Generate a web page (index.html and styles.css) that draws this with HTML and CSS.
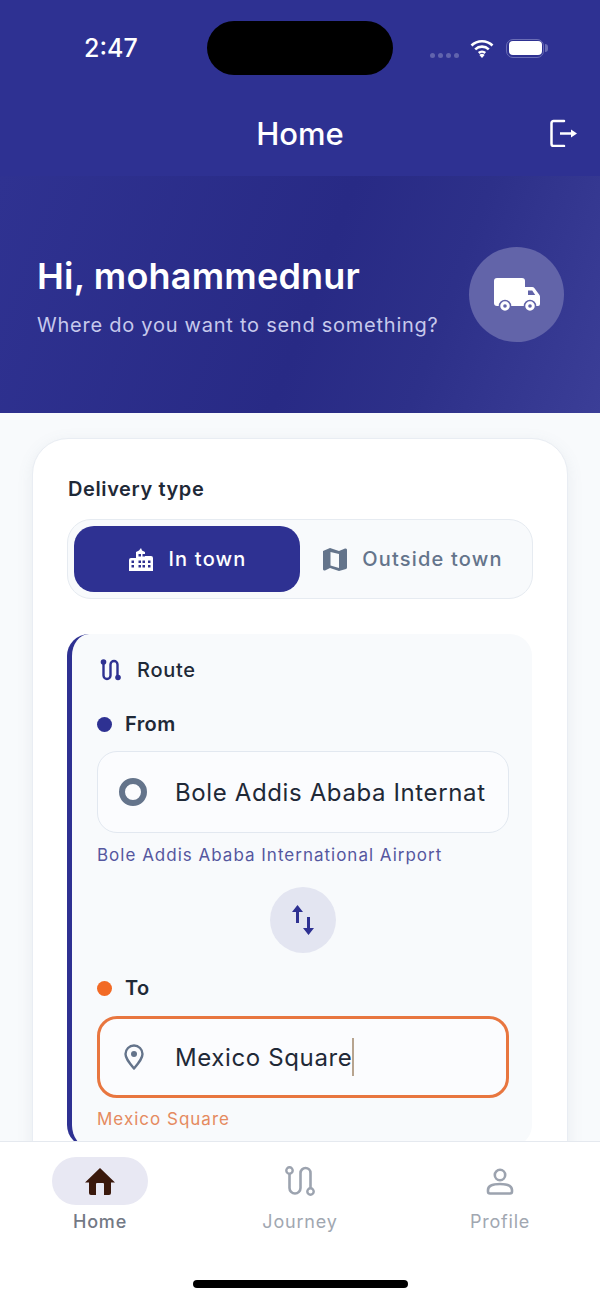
FILE: index.html
```html
<!DOCTYPE html>
<html lang="en">
<head>
    <meta charset="UTF-8">
    <title>Home</title>
    <meta name="viewport" content="width=device-width, initial-scale=1.0">
    <link rel="stylesheet" href="styles.css">
</head>
<body>
    <div class="app">
        <!-- Status bar and title -->
        <header class="topbar">
            <div class="status">
                <div class="status-left">2:47</div>
                <div class="island"></div>
                <div class="status-right">
                    <div class="signal"><i></i><i></i><i></i><i></i></div>
                    <svg class="wifi" viewBox="0 0 24 19" width="24" height="19">
                        <path d="M1.5 6.5a15 15 0 0 1 21 0M5.2 10.4a9.8 9.8 0 0 1 13.6 0M8.8 14a4.6 4.6 0 0 1 6.4 0" fill="none" stroke="#fff" stroke-width="2.6"/>
                        <path d="M12 19l-2.6-3a3.6 3.6 0 0 1 5.2 0z" fill="#fff"/>
                    </svg>
                    <div class="battery"><span></span></div>
                </div>
            </div>
            <div class="titlebar">
                <h1 class="title">Home</h1>
                <svg class="logout" viewBox="0 0 28 28" width="28" height="28">
                    <path d="M15 2H4.500A2 2 0 0 0 2.500 4v21a2 2 0 0 0 2 2H15" fill="none" stroke="#fff" stroke-width="2.500" stroke-linecap="round"/>
                    <path d="M11 14.500h12" stroke="#fff" stroke-width="2.500"/>
                    <path d="M22 10.500l6 4-6 4z" fill="#fff"/>
                </svg>
            </div>
        </header>

        <!-- Greeting -->
        <section class="hero">
            <div class="hero-text">
                <h2 class="hero-name">Hi, mohammednur</h2>
                <p class="hero-sub">Where do you want to send something?</p>
            </div>
            <div class="hero-badge">
                <svg viewBox="0 0 46 34" width="46" height="34">
                    <path d="M3 0h25a3 3 0 0 1 3 3v25H3a3 3 0 0 1-3-3V3a3 3 0 0 1 3-3z" fill="#fff"/>
                    <path d="M31 9h7a3 3 0 0 1 2.500 1.300l4.600 6.200a3 3 0 0 1 .9 2V26a2 2 0 0 1-2 2H31z" fill="#fff"/>
                    <path d="M34 12.500h4.200l3 4.500H34z" fill="#6264a9"/>
                    <circle cx="11" cy="28" r="5.500" fill="#fff" stroke="#6264a9" stroke-width="1.500"/>
                    <circle cx="11" cy="28" r="1.800" fill="#6264a9"/>
                    <circle cx="36" cy="28" r="5.500" fill="#fff" stroke="#6264a9" stroke-width="1.500"/>
                    <circle cx="36" cy="28" r="1.800" fill="#6264a9"/>
                </svg>
            </div>
        </section>

        <main class="content">
            <div class="card">
                <div class="card-label">Delivery type</div>
                <div class="toggle">
                    <div class="toggle-item active">
                        <svg viewBox="0 0 24 23" width="24" height="23">
                            <path fill-rule="evenodd" fill="#fff" d="M12 0l1 2.500 3 1.500v4h6a2 2 0 0 1 2 2v13H0V12a2 2 0 0 1 2-2h5V4l3-1.500zM9.500 6v2.500H12V6zm4 0v2.500H16V6zM2.500 12.500V15H5v-2.500zm7 0V15H12v-2.500zm4 0V15H16v-2.500zm5.500 0V15h2.500v-2.500zm-16.500 4.500V19.500H5V17zm7 0v2.500H12V17zm4 0v2.500H16V17zm5.500 0v2.500h2.500V17z"/>
                        </svg>
                        <span>In town</span>
                    </div>
                    <div class="toggle-item">
                        <svg viewBox="0 0 24 23" width="24" height="23">
                            <path fill-rule="evenodd" fill="#64748b" d="M0 3l7-3 9 3 6-2.500a1.500 1.500 0 0 1 2 1.500v17.500a2 2 0 0 1-1 1.500l-7 2-9-3-5 2.500a1.500 1.500 0 0 1-2-1.500zM7.500 4v13.500l8.500 2.500V6z"/>
                        </svg>
                        <span>Outside town</span>
                    </div>
                </div>

                <div class="route">
                    <div class="route-head">
                        <svg viewBox="0 0 22 22" width="22" height="22">
                            <path d="M3.500 3.500v13a3.500 3.500 0 0 0 7 0v-11a3.500 3.500 0 0 1 7 0v12" fill="none" stroke="#2e3192" stroke-width="2.400"/>
                            <circle cx="3.500" cy="3" r="2.800" fill="#2e3192"/>
                            <circle cx="18" cy="18.500" r="2.800" fill="#2e3192"/>
                        </svg>
                        <span>Route</span>
                    </div>

                    <div class="field-label from-label"><i class="dot blue"></i>From</div>
                    <div class="field">
                        <div class="field-icon"><div class="ring"></div></div>
                        <div class="field-text">Bole Addis Ababa Internat</div>
                    </div>
                    <div class="hint blue-text">Bole Addis Ababa International Airport</div>

                    <div class="swap">
                        <svg viewBox="0 0 22 30" width="22" height="30">
                            <path d="M5.500 18V5M16.500 12v13" fill="none" stroke="#2e3192" stroke-width="3"/>
                            <path d="M0 7l5.500-7L11 7zM11 23l5.500 7 5.500-7z" fill="#2e3192"/>
                        </svg>
                    </div>

                    <div class="field-label to-label"><i class="dot orange"></i>To</div>
                    <div class="field focused">
                        <div class="field-icon">
                            <svg viewBox="0 0 20 26" width="20" height="26">
                                <path d="M10 24.500C5 18.500 1.500 14.500 1.500 10a8.500 8.500 0 0 1 17 0c0 4.500-3.500 8.500-8.500 14.500z" fill="none" stroke="#64748b" stroke-width="2.400" stroke-linejoin="round"/>
                                <circle cx="10" cy="10" r="3" fill="#64748b"/>
                            </svg>
                        </div>
                        <div class="field-text">Mexico Square<i class="caret"></i></div>
                    </div>
                    <div class="hint orange-text">Mexico Square</div>
                </div>
            </div>
        </main>

        <!-- Bottom tabs -->
        <nav class="tabs">
            <div class="tab-row">
                <div class="tab active">
                    <div class="tab-icon">
                        <svg viewBox="0 0 30 27" width="30" height="27">
                            <path fill="#3a190c" d="M15 0l15 14.500h-4V25a2 2 0 0 1-2 2h-5V16a1 1 0 0 0-1-1h-6a1 1 0 0 0-1 1v11H6a2 2 0 0 1-2-2V14.500H0z"/>
                        </svg>
                    </div>
                    <span>Home</span>
                </div>
                <div class="tab">
                    <div class="tab-icon">
                        <svg viewBox="0 0 30 30" width="30" height="30">
                            <path d="M5 7v15a5.500 5.500 0 0 0 11 0V7a5 5 0 0 1 10 0v15" transform="translate(-.5 0)" fill="none" stroke="#9ca3af" stroke-width="2.600"/>
                            <circle cx="4.500" cy="4.500" r="3.200" fill="#fff" stroke="#9ca3af" stroke-width="2.400"/>
                            <circle cx="25.500" cy="25.500" r="3.200" fill="#fff" stroke="#9ca3af" stroke-width="2.400"/>
                        </svg>
                    </div>
                    <span>Journey</span>
                </div>
                <div class="tab">
                    <div class="tab-icon">
                        <svg viewBox="0 0 28 27" width="28" height="27">
                            <circle cx="14" cy="7" r="5.200" fill="none" stroke="#9ca3af" stroke-width="2.600"/>
                            <path d="M2 22c0-3.500 4-6 12-6s12 2.500 12 6v1.500a2 2 0 0 1-2 2H4a2 2 0 0 1-2-2z" fill="none" stroke="#9ca3af" stroke-width="2.600"/>
                        </svg>
                    </div>
                    <span>Profile</span>
                </div>
            </div>
            <div class="home-bar"></div>
        </nav>
    </div>
</body>
</html>
```

FILE: styles.css
```css
* {
    margin: 0;
    padding: 0;
    box-sizing: border-box;
}

body {
    font-family: Inter, "Noto Sans", sans-serif;
    background-color: #f8fafc;
}

.app {
    display: flex;
    flex-direction: column;
    height: 100vh;
    overflow: hidden;
}

/* Top bar */
.topbar {
    flex-shrink: 0;
    height: 176px;
    background-color: #2e3192;
    color: #fff;
}

.status {
    display: flex;
    align-items: center;
    padding-top: 21px;
}

.status-left {
    width: 207px;
    padding-left: 84px;
    font-size: 25px;
    font-weight: 500;
}

.island {
    width: 186px;
    height: 54px;
    border-radius: 27px;
    background-color: #000;
}

.status-right {
    display: flex;
    align-items: center;
    padding-left: 37px;
}

.signal {
    display: flex;
    gap: 3px;
    margin-top: 14px;
    margin-right: 11px;
}

.signal i {
    width: 5px;
    height: 5px;
    border-radius: 50%;
    background-color: #6164ad;
}

.wifi {
    margin-right: 12px;
}

.battery {
    position: relative;
    width: 38px;
    height: 19px;
    padding: 1.5px;
    border: 1.5px solid #6a6db5;
    border-radius: 7px;
}

.battery span {
    display: block;
    height: 100%;
    border-radius: 4px;
    background-color: #fff;
}

.battery:after {
    content: "";
    position: absolute;
    top: 4px;
    right: -5px;
    width: 3px;
    height: 8px;
    border-radius: 0 3px 3px 0;
    background-color: #6a6db5;
}

.titlebar {
    position: relative;
    margin-top: 39px;
    text-align: center;
}

.title {
    font-size: 31px;
    line-height: 40px;
    font-weight: 500;
}

.logout {
    position: absolute;
    top: 5px;
    right: 23px;
}

/* Greeting */
.hero {
    flex-shrink: 0;
    display: flex;
    align-items: center;
    justify-content: space-between;
    height: 237px;
    padding: 0 36px 0 37px;
    background: linear-gradient(110deg, #2f3291 0%, #282a85 52%, #2d3089 72%, #3b3e97 100%);
    color: #fff;
}

.hero-text {
    padding-top: 4px;
}

.hero-name {
    font-size: 36px;
    line-height: 42px;
    font-weight: 600;
    letter-spacing: 0.2px;
}

.hero-sub {
    margin-top: 15px;
    font-size: 20px;
    line-height: 26px;
    letter-spacing: 0.75px;
    color: #c7c9ec;
}

.hero-badge {
    display: flex;
    align-items: center;
    justify-content: center;
    width: 95px;
    height: 95px;
    border-radius: 50%;
    background-color: #6264a9;
}

/* Main card */
.content {
    flex: 1;
    min-height: 0;
    overflow: hidden;
    padding: 25px 32px 0;
}

.card {
    height: 800px;
    padding: 38px 34px 0;
    background-color: #fff;
    border: 1px solid #e9edf3;
    border-radius: 36px;
    box-shadow: 0 4px 16px rgba(100, 116, 139, 0.1);
}

.card-label {
    padding-left: 1px;
    font-size: 20px;
    line-height: 24px;
    font-weight: 600;
    letter-spacing: 0.6px;
    color: #1f2937;
}

.toggle {
    display: flex;
    height: 80px;
    margin-top: 18px;
    padding: 6px;
    background-color: #f8fafc;
    border: 1px solid #e6ebf1;
    border-radius: 24px;
}

.toggle-item {
    display: flex;
    align-items: center;
    justify-content: center;
    gap: 15px;
    width: 50%;
    border-radius: 20px;
    font-size: 20px;
    font-weight: 500;
    letter-spacing: 1.2px;
    color: #64748b;
}

.toggle-item.active {
    padding-left: 2px;
    background-color: #2e3192;
    color: #fff;
}

/* Route panel */
.route {
    margin: 35px 1px 0 0;
    padding: 24px 23px 16px 25px;
    background-color: #f8fafc;
    border-left: 5px solid #2e3192;
    border-radius: 22px;
}

.route-head {
    display: flex;
    align-items: center;
    gap: 15px;
    height: 24px;
    padding-left: 3px;
    font-size: 20px;
    font-weight: 500;
    letter-spacing: 0.7px;
    color: #1f2937;
}

.field-label {
    display: flex;
    align-items: center;
    height: 24px;
    font-size: 20px;
    font-weight: 600;
    letter-spacing: 0.4px;
    color: #1f2937;
}

.from-label {
    margin-top: 30px;
}

.to-label {
    margin-top: 23px;
}

.dot {
    width: 15px;
    height: 15px;
    margin-right: 13px;
    border-radius: 50%;
}

.dot.blue {
    background-color: #2e3192;
}

.dot.orange {
    background-color: #f26a25;
}

.field {
    display: flex;
    align-items: center;
    height: 82px;
    margin-top: 15px;
    background-color: #fbfcfe;
    border: 1px solid #e2e8f0;
    border-radius: 20px;
    overflow: hidden;
}

.field.focused {
    margin-top: 16px;
    border: 3px solid #e8763f;
}

.field-icon {
    display: flex;
    flex-shrink: 0;
    justify-content: center;
    width: 70px;
}

.field.focused .field-icon {
    width: 68px;
}

.ring {
    width: 28px;
    height: 28px;
    border: 6px solid #64748b;
    border-radius: 50%;
}

.field-text {
    display: flex;
    align-items: center;
    margin-left: 7px;
    font-size: 24px;
    letter-spacing: 0.62px;
    white-space: nowrap;
    color: #1f2937;
}

.caret {
    width: 2px;
    height: 38px;
    background-color: #b7a48f;
}

.hint {
    margin-top: 10px;
    font-size: 17px;
    line-height: 24px;
    letter-spacing: 1px;
}

.blue-text {
    color: #55579f;
}

.orange-text {
    margin-top: 9px;
    color: #e58a60;
}

.swap {
    display: flex;
    align-items: center;
    justify-content: center;
    width: 66px;
    height: 66px;
    margin: 20px auto 0;
    background-color: #e3e5f1;
    border-radius: 50%;
}

/* Bottom tabs */
.tabs {
    flex-shrink: 0;
    height: 158px;
    padding-top: 15px;
    background-color: #fff;
    border-top: 1px solid #e5e9ef;
}

.tab-row {
    display: flex;
}

.tab {
    flex: 1;
    display: flex;
    flex-direction: column;
    align-items: center;
    font-size: 18px;
    line-height: 24px;
    letter-spacing: 0.8px;
    color: #a1a7b1;
}

.tab.active {
    font-weight: 500;
    color: #737985;
}

.tab-icon {
    display: flex;
    align-items: center;
    justify-content: center;
    width: 96px;
    height: 48px;
    margin-bottom: 5px;
    border-radius: 24px;
}

.tab.active .tab-icon {
    background-color: #e8e8f3;
}

.home-bar {
    width: 215px;
    height: 8px;
    margin: 46px auto 0;
    background-color: #000;
    border-radius: 4px;
}
```
